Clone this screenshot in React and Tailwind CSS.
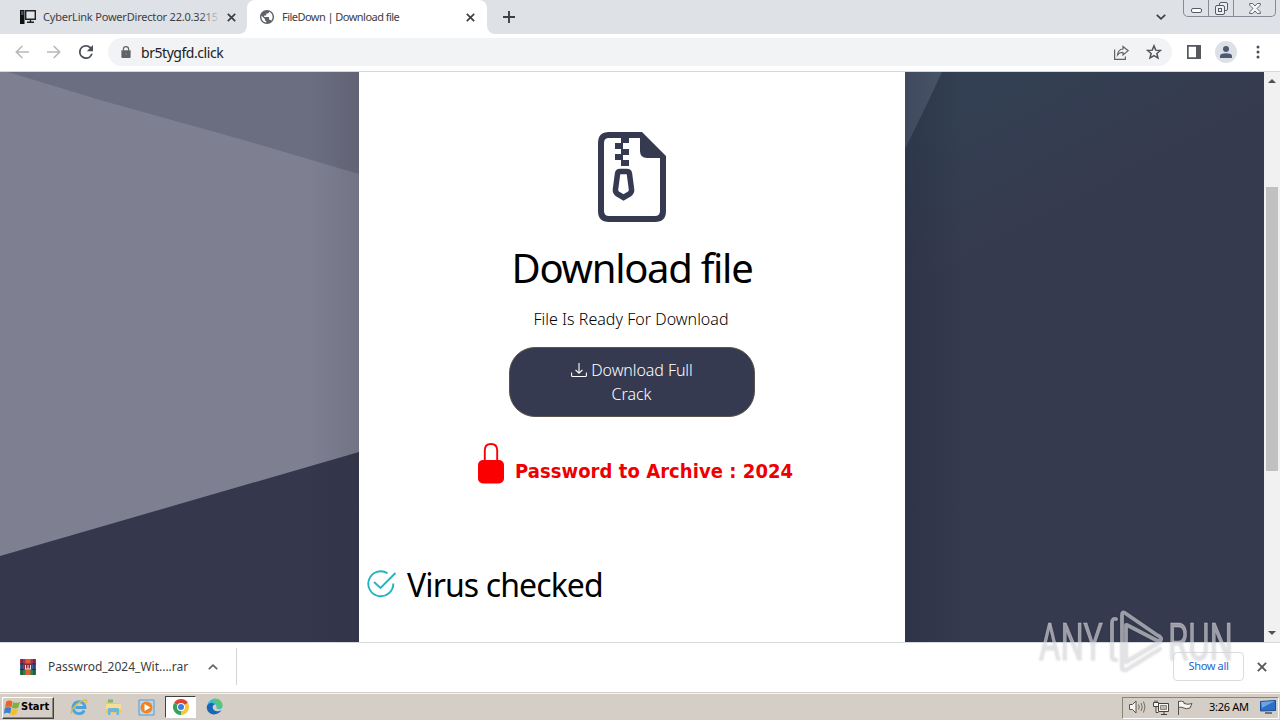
import React from "react";

const X = ({ size = 9, className = "" }) => (
  <svg width={size} height={size} viewBox="0 0 9 9" className={className}>
    <path d="M.8.8 8.2 8.2M8.2.8.8 8.2" stroke="currentColor" strokeWidth="1.7" fill="none" />
  </svg>
);

function TabStrip() {
  return (
    <div className="flex h-[34px] items-start bg-[#dee1e6] text-[#3c4043]">
      <div className="flex h-[34px] w-[247px] items-center pl-5 text-[11px]">
        <svg width="16" height="16" viewBox="0 0 16 16" className="shrink-0">
          <path d="M0 1h4.500v14H0z" fill="#111" />
          <path d="M1 3h2.500M1 5h2.500" stroke="#889" />
          <path d="M5.700 1.700h9.600v8.600H5.700z" fill="#e2e4ea" stroke="#222" strokeWidth="1.400" />
          <path d="M10.500 11v2M7 13.300h7" stroke="#222" strokeWidth="1.400" />
        </svg>
        <div className="relative ml-[7px] w-[177px] overflow-hidden whitespace-nowrap tracking-[-0.2px]">
          CyberLink PowerDirector 22.0.3215
          <span className="absolute right-0 top-0 h-full w-5 bg-gradient-to-r from-transparent to-[#dee1e6]" />
        </div>
        <X className="ml-[7px]" />
      </div>
      <div className="relative flex h-[34px] w-[240px] items-center rounded-t-lg bg-white pl-[13px] text-[11px]">
        <svg width="8" height="8" viewBox="0 0 8 8" className="absolute -left-2 bottom-0">
          <path d="M8 0v8H0a8 8 0 0 0 8-8" fill="#fff" />
        </svg>
        <svg width="8" height="8" viewBox="0 0 8 8" className="absolute -right-2 bottom-0">
          <path d="M0 0v8h8a8 8 0 0 1-8-8" fill="#fff" />
        </svg>
        <svg width="14" height="14" viewBox="2 2 20 20" className="shrink-0">
          <path fill="#5f6368" d="M12 2C6.480 2 2 6.480 2 12s4.480 10 10 10 10-4.480 10-10S17.520 2 12 2zm-1 17.930c-3.950-.49-7-3.850-7-7.930 0-.62.080-1.210.21-1.790L9 15v1c0 1.100.9 2 2 2v1.930zm6.900-2.540c-.26-.81-1-1.390-1.900-1.390h-1v-3c0-.55-.45-1-1-1H8v-2h2c.55 0 1-.45 1-1V7h2c1.100 0 2-.9 2-2v-.41c2.930 1.190 5 4.060 5 7.410 0 2.080-.8 3.970-2.100 5.390z" />
        </svg>
        <span className="ml-2 w-[177px] whitespace-nowrap tracking-[-0.54px]">FileDown | Download file</span>
        <X className="ml-[7px]" />
      </div>
      <svg width="12" height="12" viewBox="0 0 12 12" className="ml-4 mt-[11px]">
        <path d="M6 0v12M0 6h12" stroke="#3c4043" strokeWidth="1.900" />
      </svg>
      <svg width="10" height="6" viewBox="0 0 10 6" className="ml-auto mt-[14px]">
        <path d="m.8.8 4.200 4 4.200-4" stroke="#3c4043" strokeWidth="1.700" fill="none" />
      </svg>
      <div className="ml-[17px] mr-[4px] flex h-[17px] w-[93px] rounded-b-[5px] border border-t-0 border-[#878b95]">
        <div className="flex w-[25px] items-end justify-center border-r border-[#878b95] pb-[3px]">
          <span className="h-[5px] w-[11px] rounded-[2px] border border-[#555a64] bg-white" />
        </div>
        <div className="flex w-[25px] items-center justify-center border-r border-[#878b95]">
          <svg width="13" height="13" viewBox="0 0 13 13" fill="#eceef1" stroke="#555a64">
            <rect x="4.500" y=".5" width="8" height="8" rx="1.500" />
            <rect x=".5" y="3.500" width="9" height="9" rx="1.500" />
            <rect x="3.500" y="6.500" width="3" height="3" />
          </svg>
        </div>
        <div className="flex flex-1 items-center justify-center">
          <svg width="12" height="11" viewBox="0 0 12 11">
            <path d="M.7.5h3L6 3 8.300.5h3v1.700L8 5.500l3.300 3.300v1.700h-3L6 8l-2.300 2.500h-3V8.800L4 5.500.7 2.200z" fill="#f4f5f7" stroke="#555a64" strokeWidth=".9" />
          </svg>
        </div>
      </div>
    </div>
  );
}

function Toolbar() {
  return (
    <div className="flex h-[38px] items-center border-b border-[#d5d9de] bg-white pb-px pl-[15px]">
      <svg width="14" height="14" viewBox="0 0 14 14" fill="none" stroke="#b6b8bb" strokeWidth="1.600">
        <path d="M14 7H1.500M7.300 1 1.300 7l6 6" />
      </svg>
      <svg width="14" height="14" viewBox="0 0 14 14" fill="none" stroke="#b6b8bb" strokeWidth="1.600" className="ml-[18px]">
        <path d="M0 7h12.500M6.700 1l6 6-6 6" />
      </svg>
      <svg width="14" height="14" viewBox="4 4 16 16" className="ml-[18px]">
        <path fill="#4b4f54" d="M17.650 6.350A7.960 7.960 0 0 0 12 4a8 8 0 1 0 7.730 10h-2.080A6 6 0 1 1 12 6c1.660 0 3.140.69 4.220 1.780L13 11h7V4z" />
      </svg>
      <div className="ml-[15px] flex h-7 w-[1064px] items-center rounded-full bg-[#f1f3f4] pl-[13px] pr-[10px]">
        <svg width="10" height="12" viewBox="0 0 10 13">
          <path d="M0 4.500h10V12q0 1-1 1H1q-1 0-1-1z" fill="#5f6368" />
          <path d="M2.200 5V3.300a2.800 2.600 0 0 1 5.600 0V5" stroke="#5f6368" strokeWidth="1.300" fill="none" />
          <circle cx="5" cy="8.700" r="1.100" fill="#777b80" />
        </svg>
        <span className="ml-[10px] text-[14px] tracking-[-0.45px] text-[#202124]">br5tygfd.click</span>
        <svg width="15" height="15" viewBox="0 0 15 15" fill="none" stroke="#5f6368" strokeWidth="1.200" className="ml-auto">
          <path d="M.6 4.500v9.800h10.800v-2.800M9 1.500l5.200 4.200L9 9.900V7.500Q5.500 7.200 3.500 10 4 4.500 9 4z" />
        </svg>
        <svg width="16" height="16" viewBox="0 0 24 24" fill="none" stroke="#4f5358" strokeWidth="2.200" className="ml-[17px]">
          <path d="m12 2.800 2.600 6.400 7 .5-5.300 4.500 1.700 6.800-6-3.700L6 21l1.700-6.800-5.300-4.500 7-.5z" />
        </svg>
      </div>
      <svg width="14" height="14" viewBox="0 0 14 14" className="ml-[15px]">
        <path d="M0 0h14v14H0zM1.700 1.700v10.600H9V1.700z" fillRule="evenodd" fill="#55585d" />
      </svg>
      <div className="ml-[14px] flex h-[22px] w-[22px] items-center justify-center rounded-full bg-[#dde0e5]">
        <svg width="12" height="12" viewBox="0 0 12 12" fill="#4c5a78">
          <circle cx="6" cy="3" r="3" />
          <path d="M0 12v-2q0-2.800 6-2.800t6 2.800v2z" />
        </svg>
      </div>
      <svg width="4" height="14" viewBox="0 0 4 14" fill="#4b4f54" className="ml-[19px]">
        <circle cx="2" cy="2" r="1.500" />
        <circle cx="2" cy="7" r="1.500" />
        <circle cx="2" cy="12" r="1.500" />
      </svg>
    </div>
  );
}

function LeftArt() {
  return (
    <svg width="359" height="570" viewBox="0 0 359 570" className="shrink-0">
      <defs>
        <linearGradient id="ls">
          <stop offset=".86" stopColor="#222" stopOpacity="0" />
          <stop offset="1" stopColor="#222" stopOpacity=".13" />
        </linearGradient>
      </defs>
      <path fill="#7e8092" d="M0 0h359v570H0z" />
      <path fill="#6b6d81" d="M8 0h351v102L240 67 100 28z" />
      <path fill="#35374d" d="M0 484 359 380v190H0z" />
      <path fill="url(#ls)" d="M0 0h359v570H0z" />
    </svg>
  );
}

function RightArt() {
  return (
    <svg width="359" height="570" viewBox="0 0 359 570" className="shrink-0">
      <defs>
        <linearGradient id="rb" gradientUnits="userSpaceOnUse" x1="90" y1="30" x2="150" y2="145">
          <stop offset="0" stopColor="#333f52" />
          <stop offset="1" stopColor="#363a4f" />
        </linearGradient>
        <linearGradient id="rs">
          <stop offset="0" stopColor="#1c2033" stopOpacity=".25" />
          <stop offset=".16" stopColor="#1c2033" stopOpacity="0" />
        </linearGradient>
      </defs>
      <path fill="url(#rb)" d="M0 0h359v570H0z" />
      <path fill="#4b586c" d="M0 0h37L22 32 0 77z" />
      <path fill="url(#rs)" d="M0 0h359v570H0z" />
    </svg>
  );
}

function Card() {
  return (
    <div className="flex h-[570px] w-[546px] flex-col items-center bg-white text-black">
      <svg width="68" height="90" viewBox="0 0 68 90" className="mt-[60px] shrink-0">
        <path d="M44 3H11q-8 0-8 8v68q0 8 8 8h46q8 0 8-8V25" fill="none" stroke="#363a50" strokeWidth="6" />
        <path d="M42 0h2l24 24v2H49q-7 0-7-7z" fill="#363a50" />
        <path d="M23 5h8v6h-8zM17 11h8v6h-8zM23 17h8v6h-8zM17 22h8v6h-8zM23 28h8v6h-8z" fill="#363a50" />
        <path d="M22 39.500h7q2 0 2.400 2L33.500 57q.5 3-2 5l-6 3.500-6-3.500q-2.500-2-2-5l2.100-15.500q.4-2 2.400-2z" fill="#fff" stroke="#363a50" strokeWidth="5.500" />
      </svg>
      <h1 className="mt-[21px] whitespace-nowrap text-[40px] leading-[50px] tracking-[-1.3px]">Download file</h1>
      <p className="mt-[14px] whitespace-nowrap pr-[2px] text-[16px] font-light leading-6 tracking-[0.02px]">File Is Ready For Download</p>
      <div className="mt-4 flex h-[70px] w-[246px] flex-col items-center rounded-[26px] border border-[#5a524c] bg-[#363a50] pt-[10px] text-[16px] font-light leading-6 text-white">
        <div className="flex items-center">
          <svg width="16" height="14" viewBox="0 0 16 14" fill="none" stroke="#fff" strokeWidth="1.100" className="mr-1">
            <path d="M.6 9.500v3q0 1 1 1h12.800q1 0 1-1v-3M8 0v10M4.500 6.800 8 10.200l3.500-3.400" />
          </svg>
          <span className="whitespace-nowrap tracking-[-0.08px]">Download Full</span>
        </div>
        <span className="pr-px">Crack</span>
      </div>
      <div className="mt-[26px] flex w-full pl-[119px]">
        <svg width="26" height="41" viewBox="0 0 26 41" className="shrink-0">
          <path d="M6.800 19V7.500q0-6.500 6.200-6.500t6.200 6.500V19" stroke="#fa0000" strokeWidth="1.900" fill="none" />
          <rect y="17" width="26" height="23.500" rx="5" fill="#fa0000" />
        </svg>
        <span className="ml-[11px] mt-[13px] whitespace-nowrap font-['DejaVu_Sans_Condensed','DejaVu_Sans',sans-serif] text-[20px] font-bold leading-[30px] tracking-[0.06px] text-[#ee0000] [font-stretch:condensed]">Password to Archive : 2024</span>
      </div>
      <div className="mt-[79px] flex w-full items-center pl-[8px]">
        <svg width="30" height="28" viewBox="0 0 30 28" fill="none" stroke="#22b4be" strokeWidth="1.900" className="mb-[2px]">
          <path d="M20.500 3.200A12.500 12.500 0 1 0 26.300 13.500M7 12l6.500 6L28.500 3" />
        </svg>
        <h2 className="ml-[10px] whitespace-nowrap text-[32px] leading-[40px] tracking-[-0.9px]">Virus checked</h2>
      </div>
    </div>
  );
}

function Scrollbar() {
  return (
    <div className="flex w-4 flex-col items-center bg-[#f1f1f1]">
      <svg width="8" height="4" viewBox="0 0 8 4" className="mt-[7px]"><path d="M0 4h8L4 0z" fill="#505050" /></svg>
      <div className="mt-[104px] h-[284px] w-3 bg-[#c1c1c1]" />
      <svg width="8" height="4" viewBox="0 0 8 4" className="mb-[7px] mt-auto"><path d="M0 0h8L4 4z" fill="#505050" /></svg>
    </div>
  );
}

function DownloadBar() {
  return (
    <div className="flex h-[50px] items-center border-t border-[#d5d9de] bg-white pb-[2px] pl-5">
      <svg width="16" height="16" viewBox="0 0 16 16">
        <path fill="#b03058" d="M0 0h16v5H0z" />
        <path fill="#3a62a8" d="M0 5h16v5H0z" />
        <path fill="#2c8050" d="M0 10h16v6H0z" />
        <path fill="#d9622f" d="M5.500 0h5v16h-5z" />
        <path fill="#8c2740" d="M4 4.500h8v6H4z" />
        <path d="M5.500 6v4M8 6v4M10.500 6v4M5 10h6" stroke="#f3e6df" />
        <path d="M2 0v16M14 0v16" stroke="#242034" strokeWidth=".8" />
        <path d="M0 5h4M12 5h4M0 10.500h4M12 10.500h4" stroke="#302838" />
      </svg>
      <span className="ml-3 w-[141px] whitespace-nowrap text-[12px] text-[#3c4043]">Passwrod_2024_Wit....rar</span>
      <svg width="10" height="6" viewBox="0 0 10 6" className="ml-[19px]">
        <path d="M.8 5.200 5 1.200l4.200 4" stroke="#5f6368" strokeWidth="1.600" fill="none" />
      </svg>
      <div className="ml-[18px] h-[37px] w-px bg-[#d0d3d7]" />
      <div className="ml-auto flex h-[29px] w-[71px] items-center justify-center whitespace-nowrap rounded-[4px] border border-[#dadce0] text-[11px] tracking-[-0.35px] text-[#1a67d2]">Show all</div>
      <X size={10} className="ml-[13px] mr-[13px] text-[#55595e]" />
    </div>
  );
}

function Taskbar() {
  return (
    <div className="flex h-7 items-center border-t border-[#d4d0c8] bg-[#d4cec6] pl-[2px] shadow-[inset_0_1px_0_#f6f4f0]">
      <div className="mt-[2px] flex h-[22px] w-[52px] items-center border border-b-[#44403c] border-l-white border-r-[#44403c] border-t-white pl-px shadow-[inset_-1px_-1px_0_#8c8780]">
        <svg width="17" height="16" viewBox="0 0 16 15" className="shrink-0">
          <path d="M2 1.500q3-2 6 0L7 7Q4 5 1 7z" fill="#e8642c" />
          <path d="M8.500 2q3 1.500 6.500-.5L13.500 7Q11 9 7.500 7.300z" fill="#7cb33c" />
          <path d="M.8 7.500q3-2 6 0l-1 5.500q-3-2-6 0z" fill="#3c80cc" />
          <path d="M7.300 8q3 1.500 6-.3l-1.500 5.500q-3 2-6 .3z" fill="#f4be2c" />
        </svg>
        <span className="font-['DejaVu_Sans_Condensed','DejaVu_Sans',sans-serif] text-[11px] font-bold text-black [font-stretch:condensed]">Start</span>
      </div>
      <svg width="18" height="18" viewBox="0 0 18 18" fill="none" className="ml-[16px] mt-px">
        <path d="M14.300 12.500A6 6 0 1 1 15 9.500H5.500" stroke="#4ba3dc" strokeWidth="2.800" />
        <path d="M1.800 15.500C-.5 13 7 4 15 1.800q2.500-.2 1.200 3" stroke="#e3b93d" strokeWidth="1.300" />
      </svg>
      <svg width="18" height="18" viewBox="0 0 18 18" className="ml-[17px] mt-px">
        <path d="M1 3h6l1 2h8v10H1z" fill="#ecca62" />
        <path d="M3 1.500h5v3H3z" fill="#77b78a" />
        <path d="M1 6h15v5H1z" fill="#f6df94" />
        <path d="M3 17v-6q0-1 1-1h9q1 0 1 1v6h-2.500v-3h-6v3z" fill="#6db7dd" />
      </svg>
      <svg width="17" height="17" viewBox="0 0 17 17" className="ml-[15px] mt-px">
        <path d="M1 1h15v15H1z" fill="#b9d8ef" stroke="#5898c8" />
        <circle cx="8.500" cy="8.500" r="6" fill="#ef8420" />
        <path d="m6.500 5 6 3.500-6 3.500z" fill="#fff" />
      </svg>
      <div className="ml-[10px] flex h-[22px] w-[31px] items-center justify-center border border-b-white border-l-[#44403c] border-r-white border-t-[#44403c] bg-white">
        <svg width="16" height="16" viewBox="0 0 16 16">
          <path d="M8 8 1.070 4A8 8 0 0 1 14.930 4z" fill="#df4433" />
          <path d="M8 8v8A8 8 0 0 1 1.070 4z" fill="#37a158" />
          <path d="M8 8l6.930-4A8 8 0 0 1 8 16z" fill="#f5c73a" />
          <circle cx="8" cy="8" r="4" fill="#fff" />
          <circle cx="8" cy="8" r="3" fill="#3c7de0" />
        </svg>
      </div>
      <svg width="17" height="17" viewBox="0 0 17 17" className="ml-[10px]">
        <path d="M1 8a7.800 7.800 0 0 1 15.500 0c0 4-6 4-6 1.500 1-4-5-5-6.500-1.500z" fill="#39b9d4" />
        <path d="M6 1.200c5-2 10.500 1 10.500 6.300 0 3-4 3.500-6 2 1-2 .5-4-2-5z" fill="#55c878" />
        <path d="M.7 9C1.500 4.500 7 4 9 6.500 6 6.500 5.500 12 10 13q3 .8 5.500-1C12 18.500 1 18 .7 9z" fill="#1767b8" />
      </svg>
      <div className="ml-auto mr-px mt-[2px] flex h-[22px] w-[157px] items-center border border-b-white border-l-[#88847e] border-r-white border-t-[#88847e] pb-px pl-[6px]">
        <svg width="17" height="14" viewBox="0 0 17 14" fill="none" stroke="#57534f">
          <path d="M.5 4.500h3L7 1v12L3.500 9.500h-3z" fill="#f7f5f2" />
          <path d="M9.500 4.500q1.500 2.500 0 5M12 3q2.500 4 0 8M14.500 1.500q3 5.500 0 11" strokeWidth=".8" />
        </svg>
        <svg width="17" height="15" viewBox="0 0 17 15" fill="#f7f5f2" stroke="#47433f" className="ml-[7px]">
          <path d="M5.500 3.500h10v8h-10zM8 14.500h6M11 11.500v3M.5 2.500h5v4h-5zM2 .5v2M4 .5v2M3 6.500v6h2.500" />
          <path d="M7.500 5.500h6v4h-6z" fill="#bdb9b3" stroke="#8b8782" />
        </svg>
        <svg width="16" height="15" viewBox="0 0 16 15" fill="#f7f5f2" stroke="#57534f" className="ml-[7px]">
          <path d="M1.500 1v14M1.500 1.500q3-1 5.500.5v1.500q4 1.500 8 0l-2 4.500q-4 1.500-6 0-3-1.500-5.500-.5z" />
        </svg>
        <span className="ml-[16px] w-[42px] whitespace-nowrap text-[11px] tracking-[-0.3px] text-black">3:26 AM</span>
        <svg width="16" height="14" viewBox="0 0 16 14" className="ml-[9px] shrink-0">
          <path d="M.5 1.500 15.500.5v10l-15 .5z" fill="#2b6fc8" stroke="#1c4c93" />
          <path d="M1 2 15 1 2 8z" fill="#6aa5e4" />
          <path d="M5 13h7" stroke="#46566b" strokeWidth="1.500" />
        </svg>
      </div>
    </div>
  );
}

function Watermark() {
  return (
    <svg width="200" height="70" viewBox="0 0 200 70" className="pointer-events-none absolute left-[1036px] top-[606px] drop-shadow-[0_0_1px_rgba(0,0,0,0.22)]">
      <g fill="#e4e4e8" fillOpacity=".6" stroke="#e4e4e8" strokeOpacity=".35" strokeWidth=".8" fontFamily="Roboto, sans-serif" fontSize="51">
        <text x="3" y="54" textLength="64" lengthAdjust="spacingAndGlyphs">ANY</text>
        <text x="132" y="54" textLength="65" lengthAdjust="spacingAndGlyphs">RUN</text>
      </g>
      <g fill="none" stroke="#e4e4e8" strokeOpacity=".6" strokeWidth="3.800" strokeLinecap="round" strokeLinejoin="round">
        <path d="M80 13q-4-1-4 4v33q0 4 4 4" />
        <path d="M91 19l29 15q6 2 5-2-1-2-4-3L89 7q-3-2-3 2v52q0 4 4 3l34-21M90 56l34-20M90 19v36" />
      </g>
    </svg>
  );
}

export default function App() {
  return (
    <div className="relative flex h-[720px] w-[1280px] flex-col overflow-hidden bg-white font-['Noto_Sans',sans-serif]">
      <TabStrip />
      <Toolbar />
      <div className="flex h-[570px]">
        <LeftArt />
        <Card />
        <RightArt />
        <Scrollbar />
      </div>
      <DownloadBar />
      <Taskbar />
      <Watermark />
    </div>
  );
}
